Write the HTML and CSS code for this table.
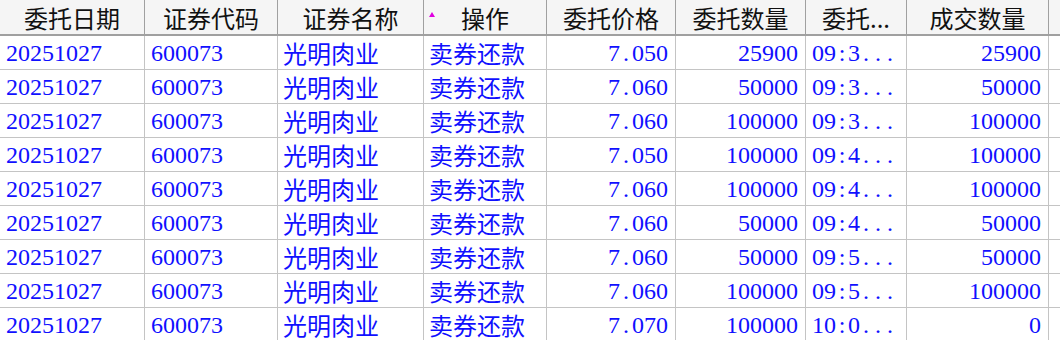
FILE: index.html
```html
<!DOCTYPE html>
<html lang="zh">
<head>
<meta charset="utf-8">
<link rel="stylesheet" href="styles.css">
</head>
<body>
<div class="grid">
  <div class="row head">
    <div class="cell">委托日期</div>
    <div class="cell">证券代码</div>
    <div class="cell">证券名称</div>
    <div class="cell sorted"><span class="tri"></span>操作</div>
    <div class="cell">委托价格</div>
    <div class="cell">委托数量</div>
    <div class="cell">委托...</div>
    <div class="cell">成交数量</div>
    <div class="cell fill"></div>
  </div>
  <div class="row"><div class="cell num">20251027</div><div class="cell num">600073</div><div class="cell cjk">光明肉业</div><div class="cell cjk">卖券还款</div><div class="cell num r">7<span class="wide">.</span>050</div><div class="cell num r">25900</div><div class="cell num">09<span class="wide">:</span>3<span class="ell">...</span></div><div class="cell num r">25900</div><div class="cell fill"></div></div>
  <div class="row"><div class="cell num">20251027</div><div class="cell num">600073</div><div class="cell cjk">光明肉业</div><div class="cell cjk">卖券还款</div><div class="cell num r">7<span class="wide">.</span>060</div><div class="cell num r">50000</div><div class="cell num">09<span class="wide">:</span>3<span class="ell">...</span></div><div class="cell num r">50000</div><div class="cell fill"></div></div>
  <div class="row"><div class="cell num">20251027</div><div class="cell num">600073</div><div class="cell cjk">光明肉业</div><div class="cell cjk">卖券还款</div><div class="cell num r">7<span class="wide">.</span>060</div><div class="cell num r">100000</div><div class="cell num">09<span class="wide">:</span>3<span class="ell">...</span></div><div class="cell num r">100000</div><div class="cell fill"></div></div>
  <div class="row"><div class="cell num">20251027</div><div class="cell num">600073</div><div class="cell cjk">光明肉业</div><div class="cell cjk">卖券还款</div><div class="cell num r">7<span class="wide">.</span>050</div><div class="cell num r">100000</div><div class="cell num">09<span class="wide">:</span>4<span class="ell">...</span></div><div class="cell num r">100000</div><div class="cell fill"></div></div>
  <div class="row"><div class="cell num">20251027</div><div class="cell num">600073</div><div class="cell cjk">光明肉业</div><div class="cell cjk">卖券还款</div><div class="cell num r">7<span class="wide">.</span>060</div><div class="cell num r">100000</div><div class="cell num">09<span class="wide">:</span>4<span class="ell">...</span></div><div class="cell num r">100000</div><div class="cell fill"></div></div>
  <div class="row"><div class="cell num">20251027</div><div class="cell num">600073</div><div class="cell cjk">光明肉业</div><div class="cell cjk">卖券还款</div><div class="cell num r">7<span class="wide">.</span>060</div><div class="cell num r">50000</div><div class="cell num">09<span class="wide">:</span>4<span class="ell">...</span></div><div class="cell num r">50000</div><div class="cell fill"></div></div>
  <div class="row"><div class="cell num">20251027</div><div class="cell num">600073</div><div class="cell cjk">光明肉业</div><div class="cell cjk">卖券还款</div><div class="cell num r">7<span class="wide">.</span>060</div><div class="cell num r">50000</div><div class="cell num">09<span class="wide">:</span>5<span class="ell">...</span></div><div class="cell num r">50000</div><div class="cell fill"></div></div>
  <div class="row"><div class="cell num">20251027</div><div class="cell num">600073</div><div class="cell cjk">光明肉业</div><div class="cell cjk">卖券还款</div><div class="cell num r">7<span class="wide">.</span>060</div><div class="cell num r">100000</div><div class="cell num">09<span class="wide">:</span>5<span class="ell">...</span></div><div class="cell num r">100000</div><div class="cell fill"></div></div>
  <div class="row"><div class="cell num">20251027</div><div class="cell num">600073</div><div class="cell cjk">光明肉业</div><div class="cell cjk">卖券还款</div><div class="cell num r">7<span class="wide">.</span>070</div><div class="cell num r">100000</div><div class="cell num">10<span class="wide">:</span>0<span class="ell">...</span></div><div class="cell num r">0</div><div class="cell fill"></div></div>
</div>
</body>
</html>
```
FILE: styles.css
```css
html, body {
  margin: 0;
  padding: 0;
  background: #ffffff;
  overflow: hidden;
}
.grid {
  width: 1060px;
}
.row {
  display: grid;
  grid-template-columns: 145px 133px 146px 123px 129px 130px 101px 142px 1fr;
  height: 34px;
  border-bottom: 1px solid #c4c4c4;
  box-sizing: border-box;
}
.cell {
  box-sizing: border-box;
  border-right: 1px solid #c4c4c4;
  display: flex;
  align-items: center;
  padding: 0 6px;
  white-space: nowrap;
  overflow: hidden;
  color: #1010ff;
}
.cell.fill {
  border-right: none;
}
.num {
  font-family: "Liberation Serif", "Noto Sans CJK SC", serif;
  font-size: 24px;
  padding-top: 2px;
}
.wide {
  display: inline-block;
  width: 12px;
  text-align: center;
}
.ell {
  letter-spacing: 6px;
  padding-left: 3px;
}
.cjk {
  font-family: "Noto Sans CJK SC", sans-serif;
  font-size: 24px;
  padding-left: 5px;
}
.r {
  justify-content: flex-end;
  padding-right: 7px;
}
.head {
  height: 36px;
  background: #f5f5f5;
  border-bottom: 2px solid #a0a0a0;
}
.head .cell {
  color: #111111;
  font-family: "Noto Sans CJK SC", sans-serif;
  font-size: 24px;
  justify-content: center;
  border-right-color: #a0a0a0;
  position: relative;
  padding-top: 0;
}
.head .cell.fill {
  border-right: none;
}
.tri {
  position: absolute;
  left: 5px;
  top: 12px;
  width: 0;
  height: 0;
  border-left: 3px solid transparent;
  border-right: 3px solid transparent;
  border-bottom: 5px solid #e000e0;
}
```
